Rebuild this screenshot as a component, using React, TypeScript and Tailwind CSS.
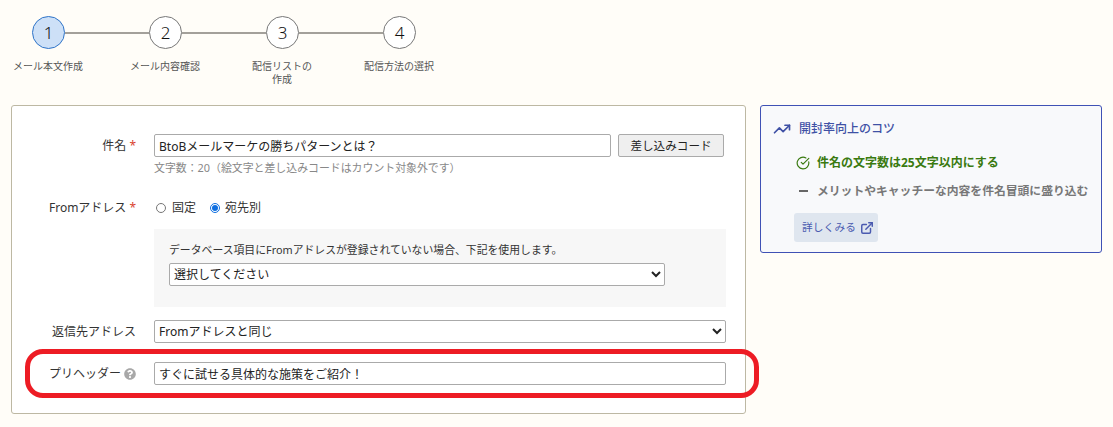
import { CircleCheckBig, ExternalLink, TrendingUp } from "lucide-react";
import { FaQuestionCircle } from "react-icons/fa";

const font = { fontFamily: '"Noto Sans", "Noto Sans CJK JP", sans-serif' };

const steps = [
  { n: 1, label: "メール本文作成", active: true },
  { n: 2, label: "メール内容確認" },
  { n: 3, label: "配信リストの\n作成" },
  { n: 4, label: "配信方法の選択" },
];

function Stepper() {
  return (
    <div className="pt-4">
      <div className="flex items-center pl-8">
        {steps.map((s, i) => (
          <div key={s.n} className="flex items-center">
            {i > 0 && <div className="h-[2px] w-[84px] bg-[#a3a09a]" />}
            <div
              className={`flex h-[33px] w-[33px] items-center justify-center rounded-full border text-[17px] font-light text-[#111] ${
                s.active ? "border-[#2f74c8] bg-[#cde0f7]" : "border-[#777] bg-white"
              }`}
            >
              {s.n}
            </div>
          </div>
        ))}
      </div>
      <div className="mt-[11px] flex h-[39px] gap-[21px]">
        {steps.map((s) => (
          <div key={s.n} className="w-[96px] whitespace-pre-line text-center text-[10px] leading-[13px] text-[#555]">
            {s.label}
          </div>
        ))}
      </div>
    </div>
  );
}

function Label({ children }: { children: React.ReactNode }) {
  return <div className="flex w-[124px] shrink-0 items-center justify-end text-xs text-[#333]">{children}</div>;
}

function Req() {
  return <span className="ml-[3px] text-[#d9432f]">*</span>;
}

const fieldBox = "h-[23px] rounded-[2px] border border-[#aaa] bg-white text-xs text-[#222]";

function FormCard() {
  return (
    <div className="w-[735px] shrink-0 rounded-[3px] border border-[#bdb8a3] bg-white pt-7 pb-[28px]">
      <div className="flex">
        <Label>
          件名
          <Req />
        </Label>
        <div className="ml-[18px] flex">
          <input readOnly value="BtoBメールマーケの勝ちパターンとは？" className={`${fieldBox} w-[457px] px-1`} />
          <button className="ml-[7px] h-[23px] w-[106px] rounded-[2px] border border-[#aaa] bg-[#efefef] text-[11.6px] text-[#222]">
            差し込みコード
          </button>
        </div>
      </div>
      <div className="mt-[3px] ml-[142px] text-[10.9px] leading-4 text-[#888]">
        文字数：20（絵文字と差し込みコードはカウント対象外です）
      </div>

      <div className="mt-5 flex h-[23px]">
        <Label>
          Fromアドレス
          <Req />
        </Label>
        <div className="ml-[18px] flex items-center text-xs text-[#333]">
          <input type="radio" name="from" className="ml-[2px] h-[10px] w-[10px] accent-[#0f6fe0]" />
          <span className="ml-[6px]">固定</span>
          <input type="radio" name="from" defaultChecked className="ml-[14px] h-[10px] w-[10px] accent-[#0f6fe0]" />
          <span className="ml-[5px]">宛先別</span>
        </div>
      </div>

      <div className="mt-[10px] ml-[142px] mr-[19px] h-[78px] bg-[#f7f7f7] pt-[13px] pl-[15px]">
        <div className="text-[10.85px] leading-4 text-[#333]">データベース項目にFromアドレスが登録されていない場合、下記を使用します。</div>
        <select className={`${fieldBox} mt-[5px] block w-[496px]`}>
          <option>選択してください</option>
        </select>
      </div>

      <div className="mt-[13px] flex">
        <Label>返信先アドレス</Label>
        <select className={`${fieldBox} ml-[18px] w-[572px]`}>
          <option>Fromアドレスと同じ</option>
        </select>
      </div>

      <div className="relative mt-[19px] flex">
        <Label>
          プリヘッダー
          <FaQuestionCircle className="ml-[3px] text-[12px] text-[#a8a8a8]" />
        </Label>
        <input readOnly value="すぐに試せる具体的な施策をご紹介！" className={`${fieldBox} ml-[18px] w-[572px] px-1`} />
        <div className="pointer-events-none absolute -top-[13px] -bottom-[13px] left-[13px] -right-[14px] rounded-[18px] border-[5px] border-[#ed1c24]" />
      </div>
    </div>
  );
}

function TipsCard() {
  return (
    <div className="ml-[14px] h-[148px] w-[342px] rounded-[3px] border border-[#3f51b5] bg-[#f8f9fb] pt-[14px] pl-3">
      <div className="flex h-[17px] items-center text-xs font-medium text-[#3f51a5]">
        <TrendingUp size={18} strokeWidth={2.25} />
        <span className="ml-2">開封率向上のコツ</span>
      </div>
      <div className="mt-[18px] ml-[23px]">
        <div className="flex h-4 items-center text-xs font-bold text-[#3a7a10]">
          <CircleCheckBig size={14} strokeWidth={2} />
          <span className="ml-[7px]">件名の文字数は25文字以内にする</span>
        </div>
        <div className="mt-3 flex h-4 items-center text-[11.8px] font-bold text-[#777]">
          <span className="ml-[3px] h-[2px] w-[9px] bg-[#666]" />
          <span className="ml-[9px]">メリットやキャッチーな内容を件名冒頭に盛り込む</span>
        </div>
        <div className="mt-[14px] -ml-[2px] inline-flex h-[29px] w-[84px] items-center rounded-[3px] bg-[#dfe6ef] pl-2 text-[10.7px] text-[#4a5ab0]">
          詳しくみる
          <ExternalLink size={14} strokeWidth={2.5} className="ml-[4px]" />
        </div>
      </div>
    </div>
  );
}

export default function App() {
  return (
    <div className="min-h-[427px] bg-[#fffdf8]" style={font}>
      <Stepper />
      <div className="mt-[6px] flex items-start pl-[11px]">
        <FormCard />
        <TipsCard />
      </div>
    </div>
  );
}
